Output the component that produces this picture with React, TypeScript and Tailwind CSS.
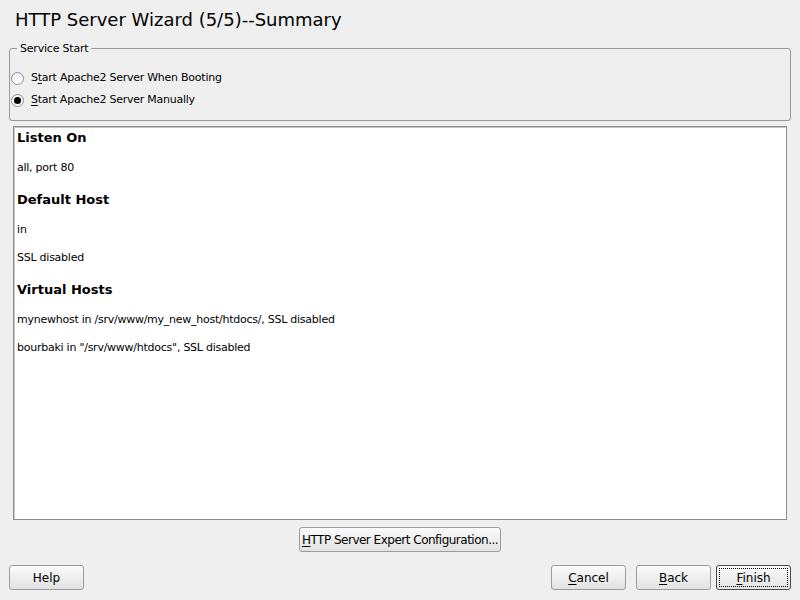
import React from 'react'

const font = { fontFamily: '"DejaVu Sans", "Liberation Sans", sans-serif' }

function Radio({ checked, label }: { checked?: boolean; label: React.ReactNode }) {
  return (
    <div className="flex items-center h-[22px] gap-[7px]">
      <span className="w-[13px] h-[13px] rounded-full border border-[#8e8e8e] bg-gradient-to-b from-[#f4f4f4] to-white flex items-center justify-center">
        {checked && <span className="w-[7px] h-[7px] rounded-full bg-black" />}
      </span>
      <span className="text-[11px] text-black tracking-[-0.25px]">{label}</span>
    </div>
  )
}

function Btn({ children, w, focus }: { children: React.ReactNode; w: string; focus?: boolean }) {
  return (
    <div
      className={`${w} h-[25px] rounded-[3px] border ${focus ? 'border-[#4a4a4a]' : 'border-[#9c9c9c]'}
        bg-gradient-to-b from-[#fbfbfb] to-[#e2e2e2] flex items-center justify-center p-[2px]`}
    >
      <div className={`w-full h-full flex items-center justify-center whitespace-nowrap text-[12px] text-black ${focus ? 'border border-dotted border-black' : ''}`}>
        {children}
      </div>
    </div>
  )
}

const U = ({ c }: { c: string }) => <span className="underline underline-offset-2">{c}</span>

export default function App() {
  return (
    <div className="w-[800px] h-[600px] bg-[#efefef] flex flex-col overflow-hidden" style={font}>
      {/* title */}
      <div className="h-[42px] pl-[15px] pt-[6px] text-[18px] text-black leading-[28px]">
        HTTP Server Wizard (5/5)--Summary
      </div>

      {/* service start group */}
      <fieldset className="mx-[9px] border border-[#9a9a9a] rounded-[3px] px-[1px] pb-[9px] h-[79px]">
        <legend className="ml-[6px] px-[3px] text-[11px] leading-[13px] text-black tracking-[-0.2px]">Service Start</legend>
        <div className="flex flex-col pt-[12px]">
          <Radio label={<>S<U c="t" />art Apache2 Server When Booting</>} />
          <Radio checked label={<><U c="S" />tart Apache2 Server Manually</>} />
        </div>
      </fieldset>

      {/* summary */}
      <div className="ml-[13px] mr-[13px] mt-[5px] h-[394px] border border-[#8c8c8c] shadow-[inset_1px_1px_0_#c8c8c8] bg-white px-[3px] pt-[1px] text-black">
        <div className="text-[13px] font-bold leading-[20px]">Listen On</div>
        <div className="text-[11px] leading-[16px] mt-[12px] tracking-[-0.25px]">all, port 80</div>
        <div className="text-[13px] font-bold leading-[20px] mt-[14px]">Default Host</div>
        <div className="text-[11px] leading-[16px] mt-[12px]">in</div>
        <div className="text-[11px] leading-[16px] mt-[12px] tracking-[-0.25px]">SSL disabled</div>
        <div className="text-[13px] font-bold leading-[20px] mt-[14px]">Virtual Hosts</div>
        <div className="text-[11px] leading-[16px] mt-[12px] tracking-[-0.25px]">mynewhost in /srv/www/my_new_host/htdocs/, SSL disabled</div>
        <div className="text-[11px] leading-[16px] mt-[12px] tracking-[-0.25px]">bourbaki in "/srv/www/htdocs", SSL disabled</div>
      </div>

      {/* expert button */}
      <div className="flex justify-center mt-[7px]">
        <Btn w="w-[202px]"><span className="tracking-[-0.5px]"><U c="H" />TTP Server Expert Configuration...</span></Btn>
      </div>

      {/* bottom buttons */}
      <div className="flex items-center mt-[13px] px-[9px]">
        <Btn w="w-[75px]">Help</Btn>
        <div className="flex-1" />
        <Btn w="w-[75px]"><span><U c="C" />ancel</span></Btn>
        <div className="w-[10px]" />
        <Btn w="w-[75px]"><span><U c="B" />ack</span></Btn>
        <div className="w-[5px]" />
        <Btn w="w-[75px]" focus><span><U c="F" />inish</span></Btn>
      </div>
    </div>
  )
}
